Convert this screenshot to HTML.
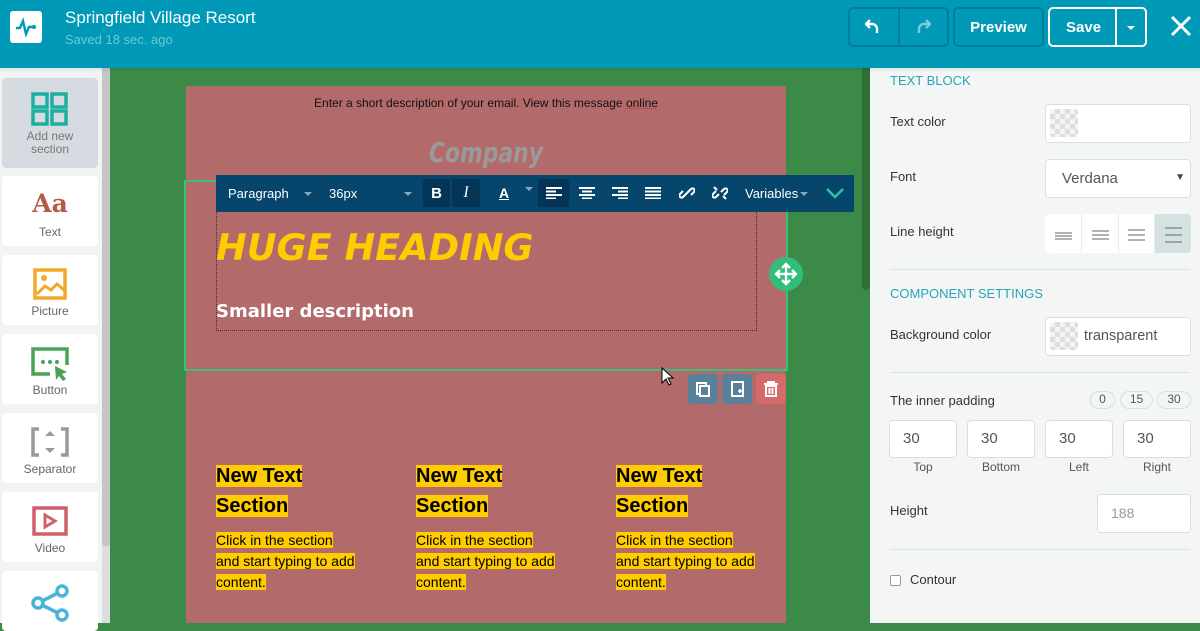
<!DOCTYPE html>
<html><head><meta charset="utf-8"><style>
*{margin:0;padding:0;box-sizing:border-box}
body{width:1200px;height:623px;overflow:hidden;font-family:"Liberation Sans",sans-serif;position:relative;background:#3b8a47}
.a{position:absolute}
#hdr{left:0;top:0;width:1200px;height:68px;background:#0099b8}
.btn{position:absolute;border:2px solid #007f99;border-radius:5px;color:#fff;font-weight:bold;font-size:15px;display:flex;align-items:center;justify-content:center}
#side{left:0;top:68px;width:110px;height:555px;background:#f2f4f4}
.tile{position:absolute;left:2px;width:96px;height:70px;background:#fff;border-radius:4px;text-align:center;font-size:12px;color:#666}
.tile span{position:absolute;left:0;right:0;bottom:7px}
#panel{left:870px;top:68px;width:330px;height:555px;background:#f4f6f6}
.lbl{position:absolute;left:20px;font-size:13px;color:#333}
.h{position:absolute;left:20px;font-size:13px;color:#2aa3b8}
.inp{position:absolute;background:#fff;border:1px solid #d6e0e0;border-radius:4px;font-size:15px;color:#555}
.chk{position:absolute;left:4px;top:4px;width:28px;height:28px;border-radius:3px;background:repeating-conic-gradient(#ddd 0 25%,#f4f4f4 0 50%) 0 0/10px 10px}
.sec{position:absolute;font-weight:bold;font-size:20px;color:#000;line-height:30px}
.sec b,.cb span{background:#ffcc00}
.cb{position:absolute;font-size:14px;color:#000;line-height:21px}
.tb{position:absolute;top:4px;height:28px;border-radius:2px;display:flex;align-items:center;justify-content:center;color:#fff}
</style></head><body>
<div id="hdr" class="a">
 <div class="a" style="left:10px;top:11px;width:32px;height:32px;background:#fff;border-radius:3px">
  <svg width="32" height="32" viewBox="0 0 32 32"><path d="M6 17h4l3-7 3 13 3-7h4" stroke="#0099b8" stroke-width="2.4" fill="none"/><circle cx="24" cy="16" r="2" fill="#0099b8"/></svg></div>
 <div class="a" style="left:65px;top:8px;color:#fff;font-size:17px">Springfield Village Resort</div>
 <div class="a" style="left:65px;top:32px;color:#6cc8d9;font-size:13px">Saved 18 sec. ago</div>
 <div class="btn" style="left:848px;top:7px;width:101px;height:40px"></div>
 <div class="a" style="left:898px;top:9px;width:2px;height:36px;background:#007f99"></div>
 <svg class="a" style="left:865px;top:18px" width="16" height="16"><path d="M5 2L1 6l4 4M1 6h7a5 5 0 0 1 4 5v4" stroke="#fff" stroke-width="2.4" fill="none"/></svg>
 <svg class="a" style="left:915px;top:18px" width="16" height="16"><path d="M11 2l4 4-4 4M15 6H8a5 5 0 0 0-4 5v4" stroke="#7ccbdc" stroke-width="2.4" fill="none"/></svg>
 <div class="btn" style="left:953px;top:7px;width:91px;height:40px">Preview</div>
 <div class="btn" style="left:1048px;top:7px;width:99px;height:40px;border-color:#fff;justify-content:flex-start;padding-left:16px">Save</div>
 <div class="a" style="left:1115px;top:8px;width:2px;height:38px;background:#fff"></div>
 <div class="a" style="left:1127px;top:26px;border:4px solid transparent;border-top:4px solid #fff"></div>
 <svg class="a" style="left:1170px;top:15px" width="22" height="22"><path d="M2 2L20 20M20 2L2 20" stroke="#fff" stroke-width="3"/></svg>
</div>

<div id="side" class="a">
 <div class="a" style="left:102px;top:0;width:8px;height:555px;background:#ddd"></div>
 <div class="a" style="left:102px;top:0;width:8px;height:478px;background:#c4c6c6;border-radius:0 0 3px 3px"></div>
 <div class="tile" style="top:10px;height:90px;background:#d5dbe1"><svg style="margin-top:14px" width="38" height="34"><g fill="none" stroke="#1bb0a0" stroke-width="3.5"><rect x="2" y="2" width="14" height="13"/><rect x="21" y="2" width="14" height="13"/><rect x="2" y="19" width="14" height="13"/><rect x="21" y="19" width="14" height="13"/></g></svg><span style="bottom:12px;line-height:13px;color:#777">Add new<br>section</span></div>
 <div class="tile" style="top:108px"><div style="margin-top:14px;font-family:'DejaVu Serif',serif;font-weight:bold;font-size:25px;line-height:28px;color:#b65c44">Aa</div><span>Text</span></div>
 <div class="tile" style="top:187px"><svg style="margin-top:13px" width="34" height="32"><rect x="2" y="2" width="30" height="28" fill="none" stroke="#f2a92a" stroke-width="3.5"/><circle cx="11" cy="10" r="3" fill="#f2a92a"/><path d="M4 26l8-8 6 4 6-6 7 6" stroke="#f2a92a" stroke-width="3" fill="none"/></svg><span>Picture</span></div>
 <div class="tile" style="top:266px"><svg style="margin-top:12px" width="40" height="36"><path d="M20 28H3V3h34v16" stroke="#4aa357" stroke-width="3.5" fill="none"/><circle cx="13" cy="16" r="2" fill="#4aa357"/><circle cx="20" cy="16" r="2" fill="#4aa357"/><circle cx="27" cy="16" r="2" fill="#4aa357"/><path d="M25 20l12 6-5 2 4 5-3 2-4-5-3 4z" fill="#4aa357"/></svg><span>Button</span></div>
 <div class="tile" style="top:345px"><svg style="margin-top:14px" width="40" height="30"><path d="M9 2H3v26h6M31 2h6v26h-6" stroke="#999" stroke-width="3.5" fill="none"/><path d="M20 4l5 5h-10zM20 26l5-5h-10z" fill="#999"/></svg><span>Separator</span></div>
 <div class="tile" style="top:424px"><svg style="margin-top:14px" width="36" height="30"><rect x="2" y="2" width="32" height="26" fill="none" stroke="#d2606a" stroke-width="3.5"/><path d="M13 9l10 6-10 6z" fill="none" stroke="#d2606a" stroke-width="3"/></svg><span>Video</span></div>
 <div class="tile" style="top:503px;height:60px"><svg style="margin-top:12px" width="40" height="40"><g stroke="#4ab3d9" stroke-width="3.5" fill="none"><circle cx="8" cy="20" r="5"/><circle cx="32" cy="8" r="5"/><circle cx="32" cy="32" r="5"/><path d="M12 18l16-8M12 22l16 8"/></g></svg></div>
</div>

<div class="a" style="left:862px;top:68px;width:8px;height:222px;background:#2f6e38;border-radius:0 0 4px 4px"></div>
<!-- email -->
<div class="a" style="left:186px;top:86px;width:600px;height:537px;background:#b36a6a">
 <div class="a" style="left:0;right:0;top:10px;text-align:center;font-size:12px;color:#111">Enter a short description of your email. View this message <u style="text-decoration-color:#c33;text-decoration-style:dotted">online</u></div>
 <div class="a" style="left:0;right:0;top:50px;text-align:center;font-family:'DejaVu Sans',sans-serif;font-style:italic;font-weight:bold;font-size:28px;color:#9a9a9a;transform:scaleX(0.78)">Company</div>
 <div class="a" style="left:30px;top:123px;width:541px;height:122px;border:1px dotted #333"></div>
 <div class="a" style="left:30px;top:140px;font-family:'DejaVu Sans',sans-serif;font-weight:bold;font-style:italic;font-size:36.7px;color:#ffcc00">HUGE HEADING</div>
 <div class="a" style="left:30px;top:215px;font-family:'DejaVu Sans',sans-serif;font-weight:bold;font-size:18px;color:#fff">Smaller description</div>
 <div class="sec" style="left:30px;top:375px"><b>New Text </b><br><b>Section</b></div>
 <div class="sec" style="left:230px;top:375px"><b>New Text </b><br><b>Section</b></div>
 <div class="sec" style="left:430px;top:375px"><b>New Text </b><br><b>Section</b></div>
 <div class="cb" style="left:30px;top:444px"><span>Click in the section </span><br><span>and start typing to add</span><br><span>content.</span></div>
 <div class="cb" style="left:230px;top:444px"><span>Click in the section </span><br><span>and start typing to add</span><br><span>content.</span></div>
 <div class="cb" style="left:430px;top:444px"><span>Click in the section </span><br><span>and start typing to add</span><br><span>content.</span></div>
</div>
<div class="a" style="left:184px;top:180px;width:604px;height:191px;border:2px solid #36c07a"></div>
<!-- toolbar -->
<div class="a" style="left:216px;top:175px;width:638px;height:37px;background:#06466c;color:#fff;font-size:13px">
 <div class="a" style="left:12px;top:11px">Paragraph</div>
 <div class="a" style="left:88px;top:17px;border:4px solid transparent;border-top:4px solid #8ab"></div>
 <div class="a" style="left:113px;top:11px">36px</div>
 <div class="a" style="left:188px;top:17px;border:4px solid transparent;border-top:4px solid #8ab"></div>
 <div class="tb" style="left:207px;width:27px;background:#043456;font-weight:bold;font-size:15px">B</div>
 <div class="tb" style="left:236px;width:28px;background:#043456;font-style:italic;font-size:16px;font-family:'Liberation Serif',serif">I</div>
 <div class="tb" style="left:277px;width:22px;font-size:14px;font-weight:bold;text-decoration:underline">A</div>
 <div class="a" style="left:309px;top:12px;border:4px solid transparent;border-top:4px solid #8ab"></div>
 <div class="tb" style="left:322px;width:31px;background:#043456"><svg width="16" height="12"><path d="M0 1h16M0 4.5h10M0 8h16M0 11.5h10" stroke="#fff" stroke-width="2"/></svg></div>
 <div class="tb" style="left:356px;width:30px"><svg width="16" height="12"><path d="M0 1h16M3 4.5h10M0 8h16M3 11.5h10" stroke="#fff" stroke-width="2"/></svg></div>
 <div class="tb" style="left:389px;width:30px"><svg width="16" height="12"><path d="M0 1h16M6 4.5h10M0 8h16M6 11.5h10" stroke="#fff" stroke-width="2"/></svg></div>
 <div class="tb" style="left:422px;width:30px"><svg width="16" height="12"><path d="M0 1h16M0 4.5h16M0 8h16M0 11.5h16" stroke="#fff" stroke-width="2"/></svg></div>
 <div class="tb" style="left:456px;width:30px"><svg width="16" height="16"><path d="M7 9l-3 3a2 2 0 0 1-3-3l3-3M9 7l3-3a2 2 0 0 1 3 3l-3 3M6 10l4-4" stroke="#fff" stroke-width="2" fill="none"/></svg></div>
 <div class="tb" style="left:489px;width:30px"><svg width="16" height="16"><path d="M7 9l-3 3a2 2 0 0 1-3-3l3-3M9 7l3-3a2 2 0 0 1 3 3l-3 3M2 2l3 3M11 11l3 3" stroke="#fff" stroke-width="2" fill="none"/></svg></div>
 <div class="a" style="left:529px;top:11px">Variables</div>
 <div class="a" style="left:584px;top:17px;border:4px solid transparent;border-top:4px solid #8ab"></div>
 <svg class="a" style="left:610px;top:13px" width="18" height="11"><path d="M1 1l8 8 8-8" stroke="#2ec4a0" stroke-width="2.5" fill="none"/></svg>
</div>
<div class="a" style="left:769px;top:257px;width:34px;height:34px;border-radius:50%;background:#30be7a"><svg width="34" height="34"><path d="M17 7v20M7 17h20M13 11l4-4 4 4M13 23l4 4 4-4M11 13l-4 4 4 4M23 13l4 4-4 4" stroke="#fff" stroke-width="2.4" fill="none"/></svg></div>
<div class="a" style="left:688px;top:374px;width:30px;height:30px;background:#5b819a;border-radius:4px"><svg width="30" height="30"><rect x="9" y="9" width="9" height="11" fill="none" stroke="#fff" stroke-width="2"/><rect x="12" y="12" width="9" height="10" fill="#5b819a" stroke="#fff" stroke-width="2"/></svg></div>
<div class="a" style="left:722px;top:374px;width:30px;height:30px;background:#5b819a;border-radius:4px"><svg width="30" height="30"><rect x="10" y="8" width="11" height="14" fill="none" stroke="#fff" stroke-width="2"/><path d="M16 17h4M18 15v4" stroke="#fff" stroke-width="1.6"/></svg></div>
<div class="a" style="left:756px;top:374px;width:30px;height:30px;background:#d46a6a;border-radius:4px"><svg width="30" height="30"><path d="M8 10h14M12 10V8h6v2M10 12h10v10H10z M13.5 14v6M16.5 14v6" stroke="#fff" stroke-width="2" fill="none"/></svg></div>
<svg class="a" style="left:661px;top:367px" width="14" height="20"><path d="M1 1v15l4-4 3 6 2-1-3-6h5z" fill="#fff" stroke="#000"/></svg>

<div id="panel" class="a">
 <div class="h" style="top:5px">TEXT BLOCK</div>
 <div class="lbl" style="top:46px">Text color</div>
 <div class="inp" style="left:175px;top:36px;width:146px;height:39px"><div class="chk"></div></div>
 <div class="lbl" style="top:101px">Font</div>
 <div class="inp" style="left:175px;top:91px;width:146px;height:39px;padding:10px 0 0 16px">Verdana<span style="position:absolute;right:5px;top:12px;font-size:10px;color:#444">▼</span></div>
 <div class="lbl" style="top:156px">Line height</div>
 <div class="a" style="left:175px;top:146px;width:146px;height:39px;background:#fff;border-radius:4px;overflow:hidden">
  <svg width="146" height="39"><rect x="110" y="0" width="36" height="39" fill="#d5e2e2"/><path d="M36.5 0v39M73.5 0v39M109.5 0v39" stroke="#e8eeee"/><g stroke="#666"><path d="M10 19h17M10 22h17M10 25h17M47 17h17M47 21h17M47 25h17M83 16h17M83 21h17M83 26h17M120 14h17M120 21h17M120 28h17"/></g></svg></div>
 <div class="a" style="left:20px;top:201px;width:300px;height:1px;background:#d6e4e4"></div>
 <div class="h" style="top:218px">COMPONENT SETTINGS</div>
 <div class="lbl" style="top:259px">Background color</div>
 <div class="inp" style="left:175px;top:249px;width:146px;height:39px;padding:10px 0 0 38px;font-size:14.5px"><div class="chk"></div>transparent</div>
 <div class="a" style="left:20px;top:304px;width:300px;height:1px;background:#d6e4e4"></div>
 <div class="lbl" style="top:325px">The inner padding</div>
 <div class="inp" style="left:220px;top:323px;width:25px;height:18px;border-radius:9px;font-size:12px;text-align:center;line-height:15px;background:#f4f6f6">0</div>
 <div class="inp" style="left:250px;top:323px;width:33px;height:18px;border-radius:9px;font-size:12px;text-align:center;line-height:15px;background:#f4f6f6">15</div>
 <div class="inp" style="left:287px;top:323px;width:34px;height:18px;border-radius:9px;font-size:12px;text-align:center;line-height:15px;background:#f4f6f6">30</div>
 <div class="inp" style="left:19px;top:352px;width:68px;height:38px;padding:9px 0 0 13px">30</div>
 <div class="inp" style="left:97px;top:352px;width:68px;height:38px;padding:9px 0 0 13px">30</div>
 <div class="inp" style="left:175px;top:352px;width:68px;height:38px;padding:9px 0 0 13px">30</div>
 <div class="inp" style="left:253px;top:352px;width:68px;height:38px;padding:9px 0 0 13px">30</div>
 <div class="a" style="left:19px;top:392px;width:68px;text-align:center;font-size:12px;color:#555">Top</div>
 <div class="a" style="left:97px;top:392px;width:68px;text-align:center;font-size:12px;color:#555">Bottom</div>
 <div class="a" style="left:175px;top:392px;width:68px;text-align:center;font-size:12px;color:#555">Left</div>
 <div class="a" style="left:253px;top:392px;width:68px;text-align:center;font-size:12px;color:#555">Right</div>
 <div class="lbl" style="top:435px">Height</div>
 <div class="inp" style="left:227px;top:426px;width:94px;height:39px;padding:10px 0 0 13px;color:#999;font-size:14px">188</div>
 <div class="a" style="left:20px;top:481px;width:300px;height:1px;background:#d6e4e4"></div>
 <div class="a" style="left:20px;top:507px;width:11px;height:11px;border:1px solid #999;border-radius:2px;background:#fff"></div>
 <div class="lbl" style="left:40px;top:504px">Contour</div>
</div>
<div class="a" style="left:0;top:68px;width:1200px;height:4px;background:linear-gradient(rgba(0,0,0,.08),transparent)"></div>
</body></html>
